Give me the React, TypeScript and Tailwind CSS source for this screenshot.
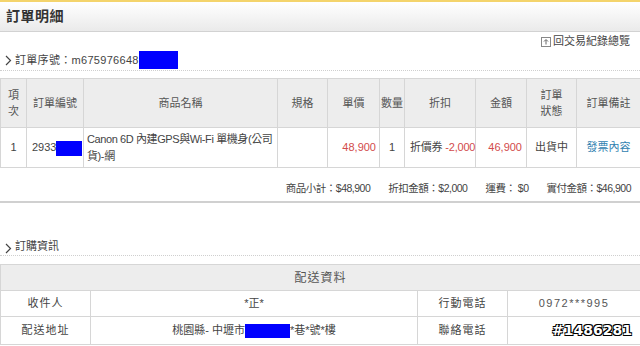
import React from 'react';

const FONT = "font-['Liberation_Sans','Noto_Sans_CJK_TC',sans-serif]";

function Chevron() {
  return (
    <svg width="7" height="11" viewBox="0 0 7 11" className="mr-[3px] shrink-0">
      <path d="M1 1 L5.5 5.5 L1 10" fill="none" stroke="#444" strokeWidth="1.2" />
    </svg>
  );
}

function BackIcon() {
  return (
    <svg width="10" height="10" viewBox="0 0 10 10" className="mr-[2px]">
      <rect x="0.5" y="0.5" width="9" height="9" fill="#fff" stroke="#888" />
      <path d="M5 7.5 V3 M3 4.5 L5 2.5 L7 4.5" fill="none" stroke="#666" strokeWidth="1" />
    </svg>
  );
}

const Redact = ({ w, h }: { w: number; h: number }) => (
  <span className="inline-block bg-[#0000ff] align-middle" style={{ width: w, height: h }} />
);

const th = 'border border-[#d6d6d6] bg-[#ededed] font-normal text-[#555] text-center leading-[16px] px-0';
const td = 'border border-[#d6d6d6] bg-white text-[#444] leading-[17px]';

export default function App() {
  return (
    <div className={`w-[640px] h-[346px] overflow-hidden bg-white relative text-[11px] ${FONT}`}>
      <div className="h-[2px] bg-[#f4d46c]" />
      <div className="h-[30px] border-b border-[#d2d2d2] bg-gradient-to-b from-white to-[#eaeaea] px-[6px] flex items-center">
        <span className="text-[14px] font-bold text-[#333] tracking-[0.5px]">訂單明細</span>
      </div>

      <div className="h-[17px] mt-[1px] flex items-center justify-end pr-[10px] text-[#444]">
        <BackIcon />
        回交易紀錄總覽
      </div>
      <div className="h-[21px] flex items-center pl-[5px] border-b border-dotted border-[#cfcfcf] text-[#444]">
        <Chevron />
        <span className="tracking-[0.3px]">訂單序號：m675976648</span>
        <Redact w={39} h={18} />
      </div>

      <table className="mt-[7px] w-[640px] table-fixed border-collapse">
        <colgroup>
          <col className="w-[26px]" />
          <col className="w-[57px]" />
          <col className="w-[194px]" />
          <col className="w-[50px]" />
          <col className="w-[52px]" />
          <col className="w-[25px]" />
          <col className="w-[71px]" />
          <col className="w-[51px]" />
          <col className="w-[50px]" />
          <col className="w-[64px]" />
        </colgroup>
        <thead>
          <tr className="h-[49px]">
            <th className={th}>項<br />次</th>
            <th className={th}>訂單編號</th>
            <th className={th}>商品名稱</th>
            <th className={th}>規格</th>
            <th className={th}>單價</th>
            <th className={th}>數量</th>
            <th className={th}>折扣</th>
            <th className={th}>金額</th>
            <th className={th}>訂單<br />狀態</th>
            <th className={th}>訂單備註</th>
          </tr>
        </thead>
        <tbody>
          <tr className="h-[40px]">
            <td className={`${td} text-center`}>1</td>
            <td className={`${td} pl-[5px] whitespace-nowrap`}>
              2933<Redact w={26} h={15} />
            </td>
            <td className={`${td} pl-[3px] pr-[2px] tracking-[-0.4px]`}>Canon 6D 內建GPS與Wi-Fi 單機身(公司貨)-網</td>
            <td className={td} />
            <td className={`${td} text-right pr-[3px] text-[#d24b4b]`}>48,900</td>
            <td className={`${td} text-center`}>1</td>
            <td className={`${td} pl-[5px] whitespace-nowrap tracking-[-0.2px]`}>
              折價券 <span className="text-[#d24b4b]">-2,000</span>
            </td>
            <td className={`${td} text-right pr-[4px] text-[#d24b4b]`}>46,900</td>
            <td className={`${td} text-center`}>出貨中</td>
            <td className={`${td} text-center text-[#3182b0]`}>發票內容</td>
          </tr>
        </tbody>
      </table>

      <div className="h-[35px] flex items-end justify-end pr-[9px] pb-[4px] border-b-2 border-[#d0d0d0] text-[#444] text-[10.5px] gap-[18px] tracking-[-0.5px]">
        <span>商品小計：$48,900</span>
        <span>折扣金額：$2,000</span>
        <span>運費： $0</span>
        <span>實付金額：$46,900</span>
      </div>

      <div className="h-[53px] flex items-end pl-[5px] pb-[1px] border-b border-dotted border-[#cfcfcf] text-[#444]">
        <Chevron />
        訂購資訊
      </div>

      <table className="mt-[8px] w-[640px] table-fixed border-collapse">
        <colgroup>
          <col className="w-[90px]" />
          <col className="w-[327px]" />
          <col className="w-[90px]" />
          <col className="w-[133px]" />
        </colgroup>
        <thead>
          <tr className="h-[26px]">
            <th colSpan={4} className={`${th} text-[12px] tracking-[1px]`}>配送資料</th>
          </tr>
        </thead>
        <tbody>
          <tr className="h-[26px]">
            <td className={`${td} text-center tracking-[1px]`}>收件人</td>
            <td className={`${td} text-center`}>*正*</td>
            <td className={`${td} text-center tracking-[1px]`}>行動電話</td>
            <td className={`${td} text-center tracking-[1.5px] text-[#555]`}>0972***995</td>
          </tr>
          <tr className="h-[28px]">
            <td className={`${td} text-center tracking-[1px]`}>配送地址</td>
            <td className={`${td} text-center whitespace-nowrap`}>
              桃園縣- 中壢市<Redact w={45} h={14} />*巷*號*樓
            </td>
            <td className={`${td} text-center tracking-[1px]`}>聯絡電話</td>
            <td className={`${td} text-center`}>-</td>
          </tr>
        </tbody>
      </table>

      <div className="absolute right-[8px] bottom-[5px] text-[14px] font-bold text-white [text-shadow:1px_1px_0_#000,-1px_-1px_0_#000,1px_-1px_0_#000,-1px_1px_0_#000] font-['DejaVu_Sans',sans-serif]">
        #1486281
      </div>
    </div>
  );
}
